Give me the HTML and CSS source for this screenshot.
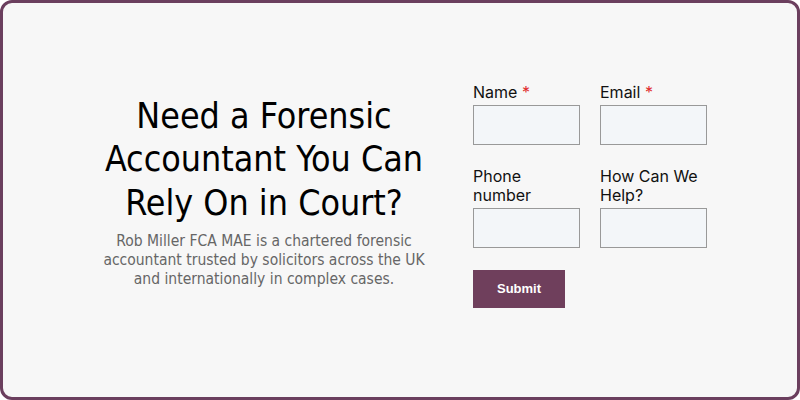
FILE: index.html
```html
<!DOCTYPE html>
<html lang="en">
<head>
  <meta charset="UTF-8" />
  <title>Forensic Accountant</title>
  <link rel="stylesheet" href="styles.css">
</head>
<body>
  <div class="frame">
    <div class="intro">
      <h1>Need a Forensic Accountant You Can Rely On in Court?</h1>
      <p>Rob Miller FCA MAE is a chartered forensic accountant trusted by solicitors across the UK and internationally in complex cases.</p>
    </div>
    <form class="enquiry">
      <div class="field">
        <label>Name <span class="req">*</span></label>
        <input type="text" />
      </div>
      <div class="field">
        <label>Email <span class="req">*</span></label>
        <input type="email" />
      </div>
      <div class="field">
        <label>Phone number</label>
        <input type="tel" />
      </div>
      <div class="field">
        <label>How Can We Help?</label>
        <input type="text" />
      </div>
      <button type="button">Submit</button>
    </form>
  </div>
</body>
</html>
```

FILE: styles.css
```css
body {
  margin: 0;
}
.frame {
  width: 800px;
  height: 400px;
  box-sizing: border-box;
  border: 3px solid #6b3f5e;
  border-radius: 12px;
  background: #f7f7f7;
  display: flex;
  align-items: center;
  gap: 39px;
  padding-left: 91px;
}
.intro {
  width: 340px;
  text-align: center;
  font-family: 'DejaVu Sans Condensed', 'DejaVu Sans', sans-serif;
  margin-bottom: 17px;
}
h1 {
  margin: 0 0 8px;
  font-weight: normal;
  font-size: 35.5px;
  line-height: 43.5px;
  color: #000;
}
.intro p {
  margin: 0;
  font-size: 15.5px;
  line-height: 19px;
  color: #666;
}
.enquiry {
  width: 234px;
  display: grid;
  grid-template-columns: 107px 107px;
  column-gap: 20px;
  row-gap: 22px;
  font-family: Inter, sans-serif;
  margin-bottom: 10px;
}
.field {
  display: flex;
  flex-direction: column;
  justify-content: flex-end;
}
label {
  font-size: 16px;
  line-height: 19px;
  color: #111;
  margin-bottom: 3px;
}
.req {
  color: #e02b2b;
}
input {
  box-sizing: border-box;
  width: 107px;
  height: 40px;
  border: 1px solid #999;
  background: #f3f6f9;
  margin: 0;
}
button {
  width: 92px;
  height: 38px;
  background: #6f3f5c;
  color: #fff;
  border: none;
  font-family: 'Liberation Sans', Arial, sans-serif;
  font-weight: bold;
  font-size: 13px;
}
```
